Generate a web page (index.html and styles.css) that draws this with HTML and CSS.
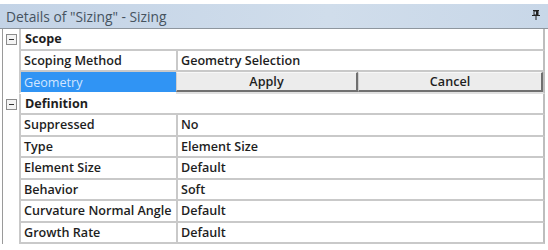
FILE: index.html
```html
<!DOCTYPE html>
<html>
<head>
<meta charset="utf-8">
<link rel="stylesheet" href="styles.css">
</head>
<body>
<div class="panel">
  <div class="titlebar">
    <span class="title">Details of "Sizing" - Sizing</span>
    <svg class="pin" width="8" height="10" viewBox="0 0 8 10">
      <rect x="1" y="0" width="6" height="1" fill="#222"/>
      <rect x="2" y="1" width="4" height="4" fill="none" stroke="#222" stroke-width="1"/>
      <rect x="4" y="1" width="2" height="4" fill="#222"/>
      <rect x="0" y="5" width="8" height="1" fill="#222"/>
      <rect x="3.5" y="6" width="1" height="4" fill="#222"/>
    </svg>
  </div>
  <div class="grid">
    <div class="row section">
      <div class="gutter"><span class="toggle"></span></div>
      <div class="head">Scope</div>
    </div>
    <div class="row">
      <div class="gutter"></div>
      <div class="name">Scoping Method</div>
      <div class="value">Geometry Selection</div>
    </div>
    <div class="row">
      <div class="gutter"></div>
      <div class="name selected">Geometry</div>
      <div class="buttons">
        <div class="btn">Apply</div>
        <div class="btn">Cancel</div>
      </div>
    </div>
    <div class="row section">
      <div class="gutter"><span class="toggle"></span></div>
      <div class="head">Definition</div>
    </div>
    <div class="row">
      <div class="gutter"></div>
      <div class="name">Suppressed</div>
      <div class="value">No</div>
    </div>
    <div class="row">
      <div class="gutter"></div>
      <div class="name">Type</div>
      <div class="value">Element Size</div>
    </div>
    <div class="row">
      <div class="gutter"></div>
      <div class="name">Element Size</div>
      <div class="value">Default</div>
    </div>
    <div class="row">
      <div class="gutter"></div>
      <div class="name">Behavior</div>
      <div class="value">Soft</div>
    </div>
    <div class="row">
      <div class="gutter"></div>
      <div class="name">Curvature Normal Angle</div>
      <div class="value">Default</div>
    </div>
    <div class="row">
      <div class="gutter"></div>
      <div class="name">Growth Rate</div>
      <div class="value">Default</div>
    </div>
  </div>
</div>
</body>
</html>
```
FILE: styles.css
```css
html, body {
  margin: 0;
  padding: 0;
  background: #ffffff;
}
body {
  width: 548px;
  height: 250px;
  overflow: hidden;
  font-family: "Open Sans", "Noto Sans", sans-serif;
  font-size: 12.6px;
  color: #1e1e1e;
}
.panel {
  padding-top: 4px;
}
.titlebar {
  height: 25px;
  background: linear-gradient(to right, #c3d3e6, #d0ddeb 60%, #c8d7e8);
  border-bottom: 1px solid #8e969e;
  display: flex;
  align-items: center;
  justify-content: space-between;
  padding: 0 8px 0 6px;
  box-sizing: border-box;
}
.title {
  color: #46535f;
  font-size: 13.8px;
}
.pin {
  margin-top: -2px;
}
.grid {
  width: 543px;
  border-left: 1px solid #9a9a9a;
  margin-left: 2px;
  box-sizing: border-box;
}
.row {
  display: grid;
  grid-template-columns: 16px 157px 1fr;
  height: 21.5px;
}
.gutter {
  display: flex;
  align-items: center;
  justify-content: center;
  padding-left: 1px;
}
.toggle {
  width: 9px;
  height: 9px;
  border: 1px solid #8c8c8c;
  background: #f4f4f4;
  position: relative;
}
.toggle::after {
  content: "";
  position: absolute;
  left: 2px;
  top: 4px;
  width: 5px;
  height: 1px;
  background: #333;
}
.head, .name, .value {
  display: flex;
  align-items: center;
  border-bottom: 2px solid #c9c9c9;
  border-left: 2px solid #c9c9c9;
  font-weight: 600;
  white-space: nowrap;
}
.head {
  grid-column: 2 / 4;
  font-weight: 700;
  padding-left: 4px;
  border-right: 2px solid #bdbdbd;
}
.name {
  padding-left: 3px;
}
.value {
  padding-left: 3px;
  border-right: 2px solid #bdbdbd;
}
.name.selected {
  background: #3094f4;
  color: #d2e6ff;
  border-bottom-color: #ffffff;
  font-weight: 400;
}
.buttons {
  display: grid;
  grid-template-columns: 182px 1fr;
  border-bottom: 2px solid #e0e0e0;
  border-right: 2px solid #bdbdbd;
}
.btn {
  display: flex;
  align-items: center;
  justify-content: center;
  background: #ececec;
  border-top: 1px solid #f8f8f8;
  border-left: 1px solid #cfcfcf;
  border-right: 2px solid #707070;
  border-bottom: 2px solid #707070;
  font-weight: 600;
}
```
